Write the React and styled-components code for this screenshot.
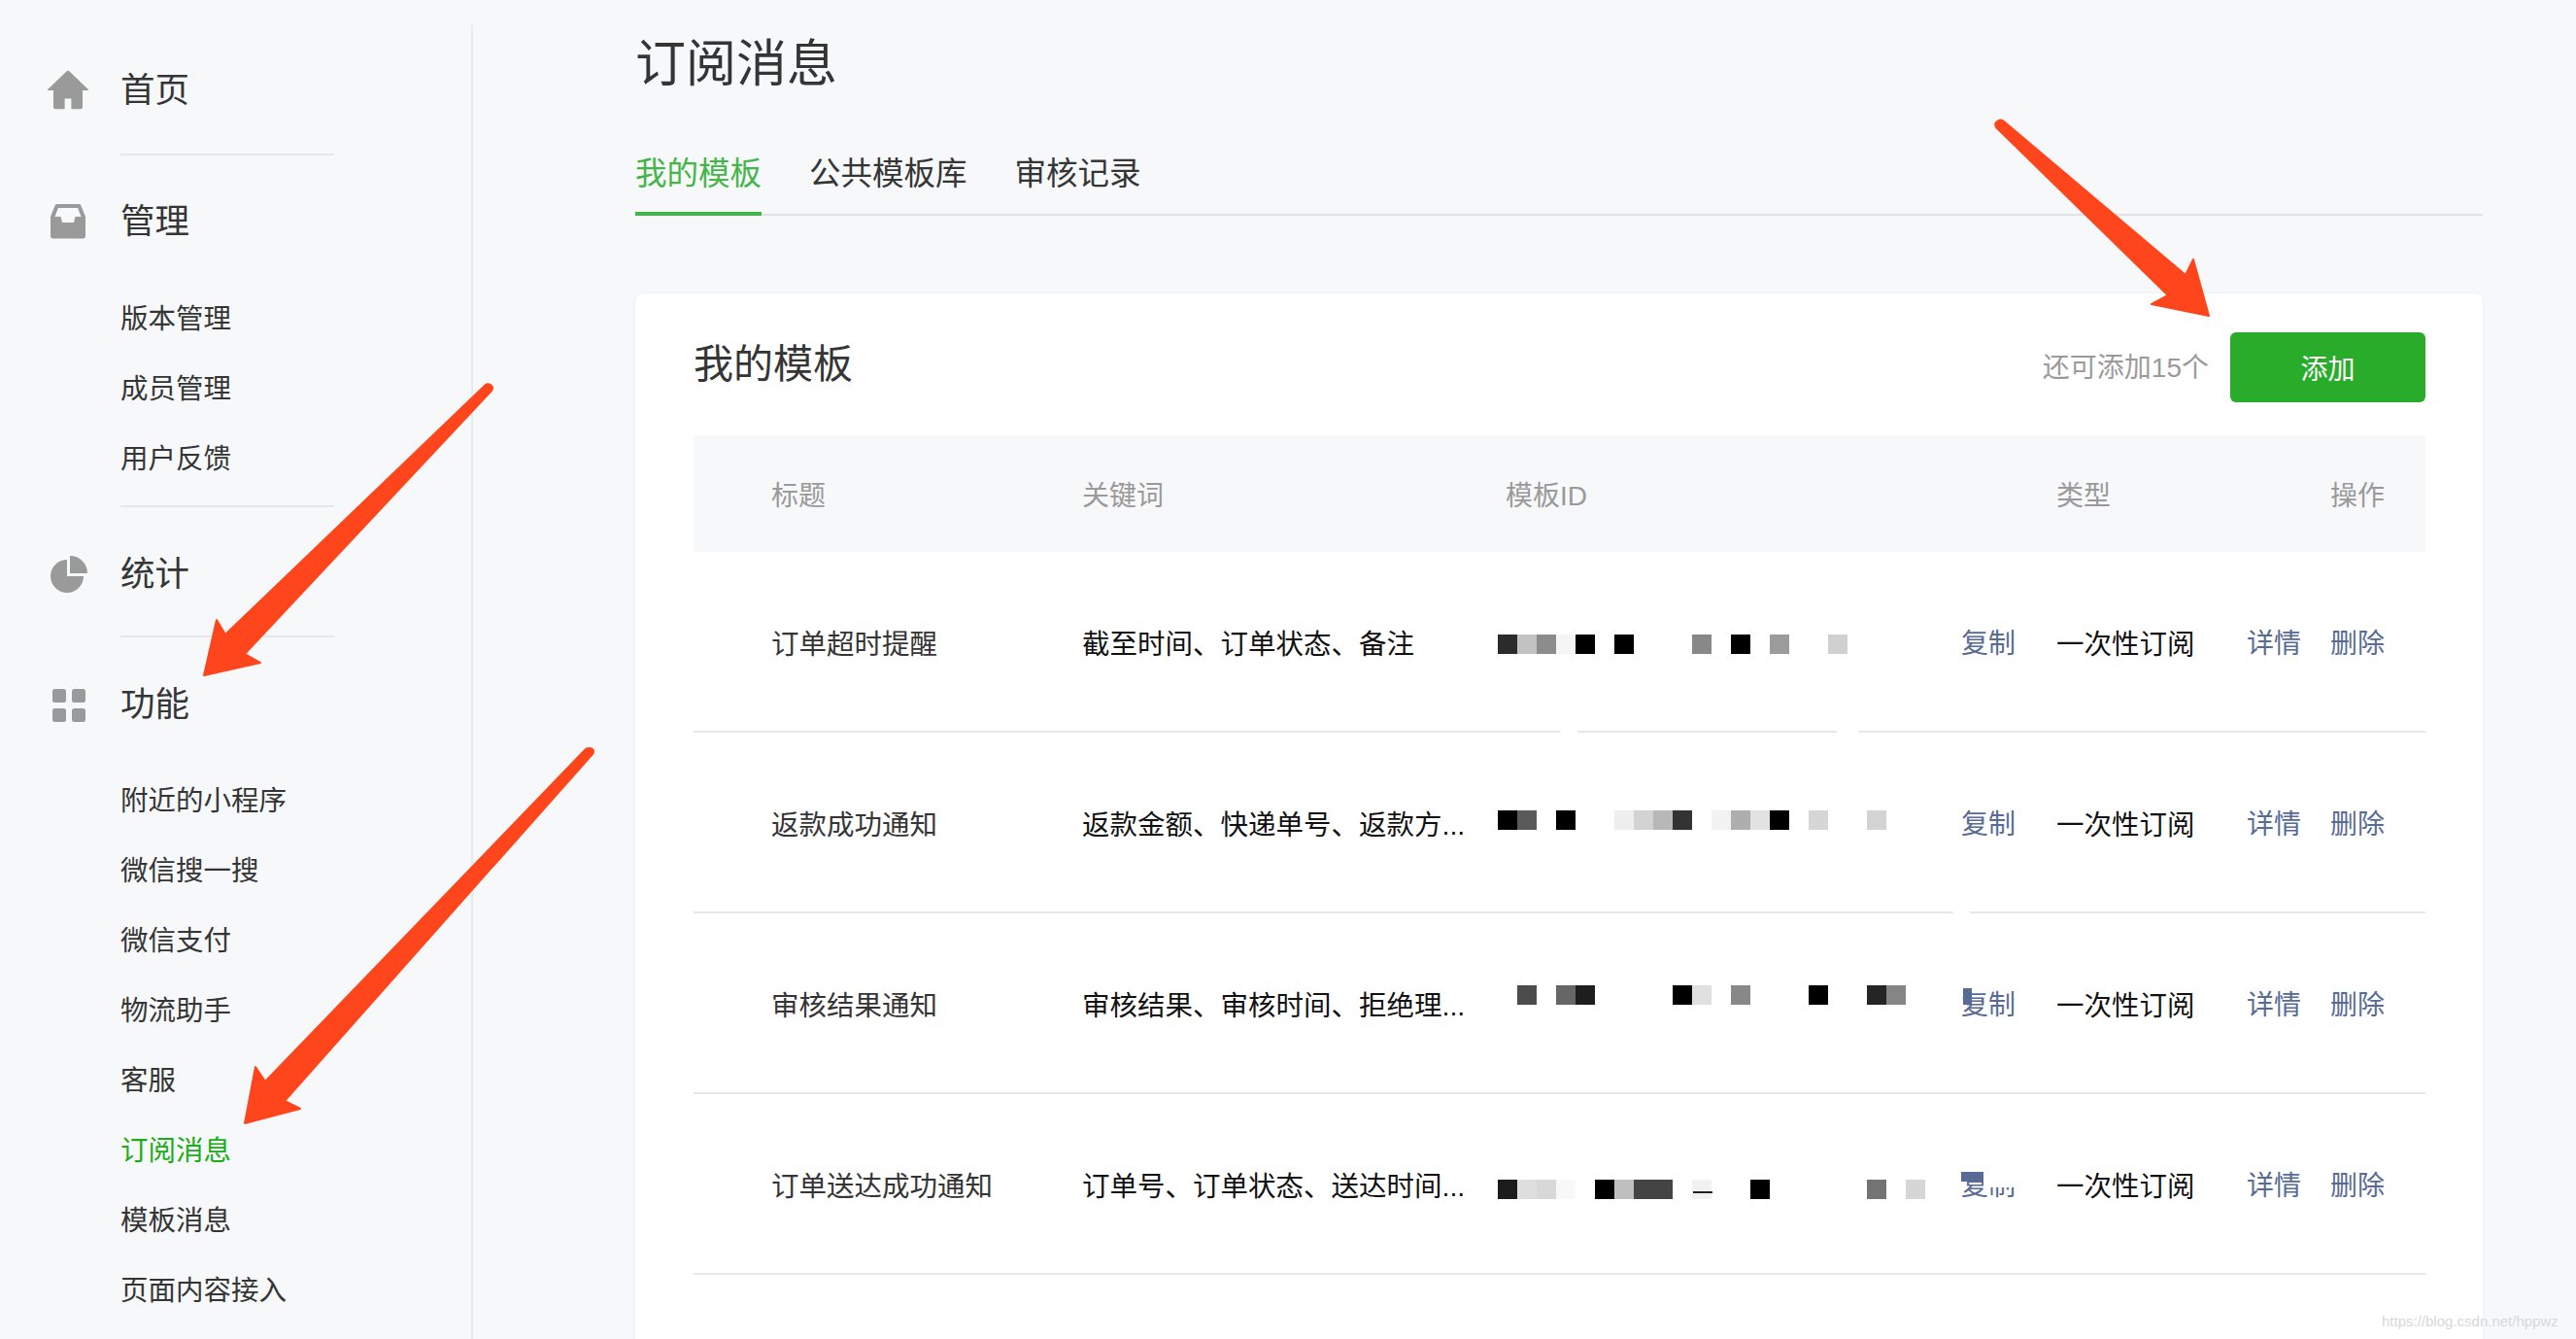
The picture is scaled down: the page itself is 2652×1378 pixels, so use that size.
import React from 'react';
import styled, { createGlobalStyle } from 'styled-components';

const FONT = '"Liberation Sans", "Noto Sans CJK SC", sans-serif';

const GlobalStyle = createGlobalStyle`
  html, body {
    margin: 0;
    background: #f6f8f9;
    font-family: ${FONT};
    color: #353535;
  }
  body {
    height: 1378px;
    overflow: hidden;
  }
`;

const Page = styled.div`
  position: relative;
  display: flex;
  align-items: flex-start;
  width: 2652px;
  height: 1378px;
  overflow: hidden;
`;

/* sidebar */
const Sidebar = styled.nav`
  width: 487px;
  height: 1352px;
  margin-top: 26px;
  padding-top: 37px;
  box-sizing: border-box;
  border-right: 2px solid #e7e9ec;
  flex-shrink: 0;
`;

const NavSection = styled.div`
  margin-left: 124px;
  width: 220px;
  padding-bottom: ${props => props.$pb}px;
  margin-bottom: ${props => props.$mb}px;
  border-bottom: ${props => (props.$last ? 'none' : '2px solid #e7e7eb')};
`;

const NavHead = styled.div`
  position: relative;
  height: 60px;
  line-height: 60px;
  font-size: 35.5px;
  color: #353535;
  white-space: nowrap;
`;

const NavIcon = styled.svg`
  position: absolute;
  left: -84px;
  top: 0;
  width: 60px;
  height: 60px;
  fill: #9a9a9a;
`;

const SubList = styled.div`
  margin-top: ${props => props.$mt}px;
`;

const SubItem = styled.div`
  height: 72px;
  line-height: 72px;
  font-size: 28.5px;
  white-space: nowrap;
  color: ${props => (props.$active ? '#1aad19' : '#353535')};
`;

/* main */
const Main = styled.main`
  width: 1902px;
  margin-left: 167px;
  flex-shrink: 0;
`;

const PageTitle = styled.h1`
  margin: 0;
  padding-top: 34px;
  height: 96px;
  line-height: 64px;
  box-sizing: border-box;
  font-size: 52px;
  font-weight: 400;
  color: #353535;
`;

const Tabs = styled.div`
  display: flex;
  gap: 49px;
  margin-top: 31px;
  height: 95px;
  box-sizing: border-box;
  border-bottom: 2px solid #e0e2e5;
`;

const Tab = styled.div`
  height: 95px;
  box-sizing: border-box;
  line-height: 104px;
  font-size: 32.5px;
  color: ${props => (props.$active ? '#44b549' : '#353535')};
  border-bottom: ${props => (props.$active ? '4px solid #44b549' : 'none')};
`;

const Card = styled.section`
  margin-top: 80px;
  height: 1300px;
  padding: 40px 59px 0 60px;
  box-sizing: border-box;
  background: #fff;
  border-radius: 8px;
  box-shadow: 0 0 4px rgba(0, 0, 0, 0.05);
`;

const CardHead = styled.div`
  display: flex;
  align-items: center;
  justify-content: space-between;
  height: 72px;
`;

const CardTitle = styled.h2`
  margin: 0;
  padding-bottom: 14px;
  font-size: 41px;
  font-weight: 400;
  color: #353535;
`;

const AddArea = styled.div`
  display: flex;
  align-items: center;
  gap: 22px;
`;

const Hint = styled.span`
  padding-bottom: 4px;
  font-size: 28px;
  color: #9a9a9a;
`;

const AddButton = styled.button`
  width: 201px;
  height: 72px;
  border: none;
  border-radius: 6px;
  background: #29ac2a;
  color: #fff;
  font-family: ${FONT};
  font-size: 28px;
`;

const columns = '400px 436px 567px 1fr';

const TableHead = styled.div`
  display: grid;
  grid-template-columns: ${columns};
  align-items: center;
  margin-top: 34px;
  height: 120px;
  background: #f6f8f9;
  font-size: 28px;
  color: #9a9a9a;
`;

const Row = styled.div`
  position: relative;
  display: grid;
  grid-template-columns: ${columns};
  align-items: center;
  height: 186px;
  box-sizing: border-box;
  border-bottom: 2px solid #e7e7eb;
  font-size: 28.5px;
  color: #353535;
  white-space: nowrap;
`;

const LineGap = styled.i`
  position: absolute;
  bottom: -2px;
  left: ${props => props.$left}px;
  width: ${props => props.$width}px;
  height: 2px;
  background: #fff;
`;

const TitleCell = styled.div`
  padding-left: 80px;
`;

const KeywordCell = styled.div`
  color: #111;
`;

const IdCell = styled.div`
  display: flex;
  align-items: center;
  height: 184px;
  margin-left: -8px;
`;

const Mosaic = styled.svg`
  width: 477px;
  height: 184px;
  flex-shrink: 0;
`;

const CopyLink = styled.a`
  position: relative;
  font-size: 28px;
  color: #576b95;

  ${props => props.$glitch === 'tick' && `
    &::before {
      content: '';
      position: absolute;
      left: 2px;
      top: 5px;
      width: 9px;
      height: 17px;
      background: #576b95;
    }
  `}

  ${props => props.$glitch === 'cut' && `
    &::before {
      content: '';
      position: absolute;
      left: 0;
      top: 8px;
      width: 23px;
      height: 10px;
      background: #576b95;
      box-shadow: 0 -8px 0 #fff;
    }
    &::after {
      content: '';
      position: absolute;
      left: 23px;
      top: 0;
      width: 34px;
      height: 21px;
      background: #fff;
      border-bottom: 3px solid #fff;
    }
  `}
`;

const LastCell = styled.div`
  display: flex;
  align-items: center;
  justify-content: space-between;
  padding-right: 42px;
`;

const TypeText = styled.span`
  color: #111;
`;

const Actions = styled.div`
  display: flex;
  gap: 30px;
  font-size: 28px;
  color: #576b95;
`;

const Arrows = styled.svg`
  position: absolute;
  left: 0;
  top: 0;
  width: 2652px;
  height: 1378px;
  pointer-events: none;
`;

const Watermark = styled.div`
  position: absolute;
  left: 2452px;
  top: 1348px;
  font-family: "Liberation Sans", sans-serif;
  font-size: 15px;
  line-height: 24px;
  color: #d6d8db;
  white-space: nowrap;
`;

const navGroups = [
  { title: '首页', icon: 'home', pb: 35, mb: 38 },
  {
    title: '管理', icon: 'inbox', pb: 12, mb: 39, subMt: 34,
    items: ['版本管理', '成员管理', '用户反馈'],
  },
  { title: '统计', icon: 'pie', pb: 33, mb: 39 },
  {
    title: '功能', icon: 'grid', last: true, subMt: 33,
    items: ['附近的小程序', '微信搜一搜', '微信支付', '物流助手', '客服', '订阅消息', '模板消息', '页面内容接入'],
  },
];

const Icon = ({ name }) => (
  <NavIcon viewBox="0 0 60 60">
    {name === 'home' && (
      <path d="M28.500 10.600a2 2 0 0 1 3 0L50.800 29a.5.5 0 0 1-.4.9H45v17.300a2 2 0 0 1-2 2H33.400V38.600h-6.800v10.600H17a2 2 0 0 1-2-2V29.900H9.600a.5.500 0 0 1-.4-.9z" />
    )}
    {name === 'inbox' && (
      <path fillRule="evenodd" d="M19 12h22c1.300 0 2 .6 2.500 1.700L48 25v20c0 1.400-1 2.500-2.500 2.500h-31C13 47.500 12 46.400 12 45V25l4.500-11.300C17 12.600 17.700 12 19 12zm1 4l-3.600 9h6.100l1.500 6h12l1.500-6h6.100L40 16z" />
    )}
    {name === 'pie' && (
      <g>
        <path d="M29 15V32H46A17 17 0 1 1 29 15z" />
        <path d="M32 11A18 18 0 0 1 50 29H32z" />
      </g>
    )}
    {name === 'grid' && (
      <g>
        <rect x="14" y="14" width="14" height="14" rx="2.500" />
        <rect x="34" y="14" width="14" height="14" rx="2.500" />
        <rect x="14" y="34" width="14" height="14" rx="2.500" />
        <rect x="34" y="34" width="14" height="14" rx="2.500" />
      </g>
    )}
  </NavIcon>
);

// cells of the blurred template ids: [column, grey]
const rows = [
  {
    title: '订单超时提醒',
    keywords: '截至时间、订单状态、备注',
    cellY: 85,
    cells: [[0, '#2b2b2b'], [1, '#c2c2c2'], [2, '#8c8c8c'], [3, '#f5f5f5'], [4, '#000'], [6, '#000'], [10, '#888'], [12, '#000'], [14, '#9b9b9b'], [17, '#d0d0d0']],
    gaps: [[892, 18], [1177, 22]],
  },
  {
    title: '返款成功通知',
    keywords: '返款金额、快递单号、返款方...',
    cellY: 80,
    cells: [[0, '#000'], [1, '#5a5a5a'], [3, '#000'], [6, '#eee'], [7, '#d3d3d3'], [8, '#b8b8b8'], [9, '#333'], [11, '#f2f2f2'], [12, '#aeaeae'], [13, '#e2e2e2'], [14, '#000'], [16, '#d6d6d6'], [19, '#d4d4d4']],
    gaps: [[1297, 17]],
  },
  {
    title: '审核结果通知',
    keywords: '审核结果、审核时间、拒绝理...',
    cellY: 74,
    glitch: 'tick',
    cells: [[1, '#4c4c4c'], [3, '#666'], [4, '#1e1e1e'], [9, '#000'], [10, '#e0e0e0'], [12, '#888'], [16, '#000'], [19, '#252525'], [20, '#858585']],
    gaps: [],
  },
  {
    title: '订单送达成功通知',
    keywords: '订单号、订单状态、送达时间...',
    cellY: 88,
    glitch: 'cut',
    cells: [[0, '#1c1c1c'], [1, '#dedede'], [2, '#d8d8d8'], [3, '#f8f8f8'], [5, '#000'], [6, '#bfbfbf'], [7, '#444'], [8, '#444'], [10, '#f1f1f1'], [13, '#000'], [19, '#747474'], [21, '#d6d6d6']],
    scratch: true,
    gaps: [],
  },
];

const App = () => (
  <Page>
    <GlobalStyle />
    <Sidebar>
      {navGroups.map(group => (
        <NavSection key={group.title} $pb={group.pb} $mb={group.mb} $last={group.last}>
          <NavHead>
            <Icon name={group.icon} />
            {group.title}
          </NavHead>
          {group.items && (
            <SubList $mt={group.subMt}>
              {group.items.map(item => (
                <SubItem key={item} $active={item === '订阅消息'}>{item}</SubItem>
              ))}
            </SubList>
          )}
        </NavSection>
      ))}
    </Sidebar>

    <Main>
      <PageTitle>订阅消息</PageTitle>
      <Tabs>
        <Tab $active>我的模板</Tab>
        <Tab>公共模板库</Tab>
        <Tab>审核记录</Tab>
      </Tabs>
      <Card>
        <CardHead>
          <CardTitle>我的模板</CardTitle>
          <AddArea>
            <Hint>还可添加15个</Hint>
            <AddButton>添加</AddButton>
          </AddArea>
        </CardHead>
        <TableHead>
          <TitleCell>标题</TitleCell>
          <div>关键词</div>
          <div>模板ID</div>
          <LastCell>
            <span>类型</span>
            <span>操作</span>
          </LastCell>
        </TableHead>
        {rows.map(row => (
          <Row key={row.title}>
            <TitleCell>{row.title}</TitleCell>
            <KeywordCell>{row.keywords}</KeywordCell>
            <IdCell>
              <Mosaic viewBox="0 0 477 184">
                {row.cells.map(([col, grey]) => (
                  <rect key={col} x={col * 20} y={row.cellY} width="20" height="20" fill={grey} />
                ))}
                {row.scratch && <rect x="201" y="100" width="20" height="2" fill="#222" />}
              </Mosaic>
              <CopyLink $glitch={row.glitch}>复制</CopyLink>
            </IdCell>
            <LastCell>
              <TypeText>一次性订阅</TypeText>
              <Actions>
                <span>详情</span>
                <span>删除</span>
              </Actions>
            </LastCell>
            {row.gaps.map(([left, width]) => (
              <LineGap key={left} $left={left} $width={width} />
            ))}
          </Row>
        ))}
      </Card>
    </Main>

    <Arrows viewBox="0 0 2652 1378">
      <g fill="#ff451c" stroke="#ff451c" strokeWidth="2" strokeLinejoin="round">
        <path d="M2055 131Q2053 127 2056 125Q2060 122 2063 125L2250 283L2258 267L2274 325L2215 313L2232 304Z" />
        <path d="M506 402Q508 399 506 397Q503 394 500 396L232 653L223 638L210 695L268 682L252 673Z" />
        <path d="M610 776Q612 773 610 771Q607 769 603 771L273 1113L263 1098L252 1156L309 1141L293 1133Z" />
      </g>
    </Arrows>
    <Watermark>https://blog.csdn.net/hppwz</Watermark>
  </Page>
);

export default App;
